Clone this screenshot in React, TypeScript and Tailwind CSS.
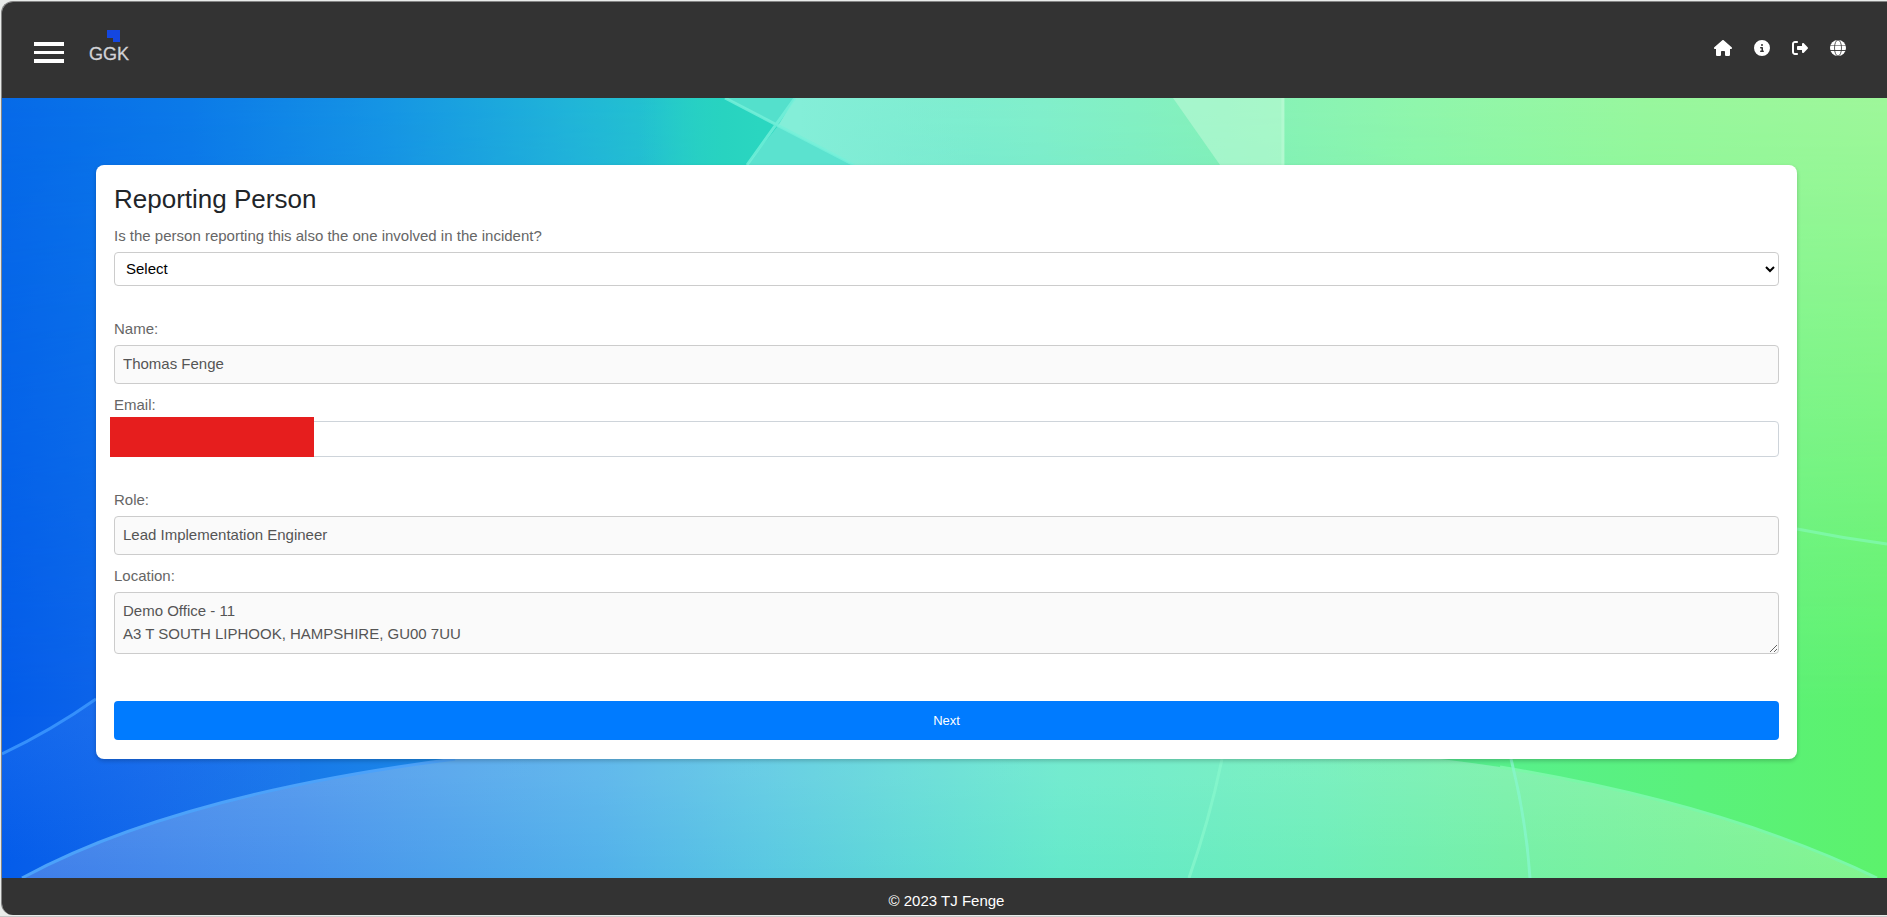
import { FaCircleInfo, FaHouse, FaRightFromBracket } from "react-icons/fa6";

const labelClass = "block mb-1 text-[15px] leading-6 text-[#666]";
const readOnlyClass = "block w-full rounded border border-[#ccc] bg-[#fafafa] px-2 text-[15px] text-[#555]";

function Logo() {
    return (
        <svg viewBox="0 0 48 40" className="h-10 w-12" role="img" aria-label="GGK">
            <path d="M19 2h13v12h-7v-4h-6z" fill="#1447e0" />
            <text x="1" y="32" fontSize="18" fontFamily="Liberation Sans, Arial, sans-serif" fill="#d2d2d6" stroke="#d2d2d6" strokeWidth="0.3">GGK</text>
        </svg>
    )
}

function Globe() {
    return (
        <svg viewBox="0 0 16 16" className="h-4 w-4" aria-hidden="true">
            <circle cx="8" cy="8" r="8" fill="#fff" />
            <ellipse cx="8" cy="8" rx="3.5" ry="8" fill="none" stroke="#333" strokeWidth="0.8" />
            <path d="M0 5.5h16" stroke="#333" strokeWidth="0.5" />
            <path d="M0 10.5h16" stroke="#333" strokeWidth="0.9" />
        </svg>
    )
}

function Wallpaper() {
    return (
        <svg viewBox="2 98 1885 780" preserveAspectRatio="none" className="absolute inset-0 h-full w-full" aria-hidden="true">
            <defs>
                <linearGradient id="base" x1="0" x2="1" y1="0" y2="0">
                    <stop offset="0" stopColor="#045cea" />
                    <stop offset="0.08" stopColor="#1268ea" />
                    <stop offset="0.22" stopColor="#1b86e8" />
                    <stop offset="0.5" stopColor="#3ccfd0" />
                    <stop offset="0.8" stopColor="#58f08a" />
                    <stop offset="1" stopColor="#5cf26c" />
                </linearGradient>
                <linearGradient id="top" x1="0" x2="1" y1="0" y2="0">
                    <stop offset="0" stopColor="#066ae8" />
                    <stop offset="0.1" stopColor="#0b7ae8" />
                    <stop offset="0.2" stopColor="#1594e4" />
                    <stop offset="0.3" stopColor="#20b4d8" />
                    <stop offset="0.35" stopColor="#23c4ce" />
                    <stop offset="0.39" stopColor="#2ad6be" />
                    <stop offset="0.43" stopColor="#7cecd6" />
                    <stop offset="0.55" stopColor="#82efcb" />
                    <stop offset="0.65" stopColor="#86f1ba" />
                    <stop offset="0.75" stopColor="#90f6ac" />
                    <stop offset="0.87" stopColor="#98f79e" />
                    <stop offset="1" stopColor="#9ef79a" />
                </linearGradient>
                <linearGradient id="fade" x1="0" x2="0" y1="0" y2="1">
                    <stop offset="0" stopColor="#fff" />
                    <stop offset="0.15" stopColor="#ddd" />
                    <stop offset="0.55" stopColor="#777" />
                    <stop offset="1" stopColor="#000" />
                </linearGradient>
                <mask id="topFade">
                    <rect x="2" y="98" width="1885" height="620" fill="url(#fade)" />
                </mask>
                <linearGradient id="facet" gradientUnits="userSpaceOnUse" x1="640" x2="760" y1="0" y2="0">
                    <stop offset="0" stopColor="#26cfc6" stopOpacity="0" />
                    <stop offset="0.7" stopColor="#28d3c0" />
                    <stop offset="1" stopColor="#2ad6c0" />
                </linearGradient>
                <linearGradient id="mint" gradientUnits="userSpaceOnUse" x1="800" x2="980" y1="0" y2="0">
                    <stop offset="0" stopColor="#84eed8" />
                    <stop offset="1" stopColor="#84eed0" stopOpacity="0" />
                </linearGradient>
                <linearGradient id="arch" gradientUnits="userSpaceOnUse" x1="22" x2="1877" y1="0" y2="0">
                    <stop offset="0" stopColor="#3f7eea" />
                    <stop offset="0.15" stopColor="#4792ec" />
                    <stop offset="0.31" stopColor="#50b0ea" />
                    <stop offset="0.4" stopColor="#58c8e2" />
                    <stop offset="0.48" stopColor="#5edad6" />
                    <stop offset="0.56" stopColor="#64e9ca" />
                    <stop offset="0.7" stopColor="#6ceeb9" />
                    <stop offset="0.8" stopColor="#74f0a6" />
                    <stop offset="1" stopColor="#82f48e" />
                </linearGradient>
                <linearGradient id="archShade" x1="0" x2="0" y1="0" y2="1">
                    <stop offset="0.3" stopColor="#fff" stopOpacity="0.1" />
                    <stop offset="1" stopColor="#fff" stopOpacity="0" />
                </linearGradient>
                <linearGradient id="glow" x1="0" x2="0" y1="0" y2="1">
                    <stop offset="0" stopColor="#2f7cf0" stopOpacity="0.4" />
                    <stop offset="1" stopColor="#2f7cf0" stopOpacity="0" />
                </linearGradient>
            </defs>

            <rect x="2" y="98" width="1885" height="780" fill="url(#base)" />
            <rect x="2" y="98" width="1885" height="620" fill="url(#top)" mask="url(#topFade)" />

            {/* facets behind the top edge of the card */}
            <path d="M640 98H725L778 126L747 165H640z" fill="url(#facet)" />
            <path d="M725 98H795L778 126z" fill="#54e0cc" />
            <path d="M778 126L854 165H747z" fill="#5be2cf" />
            <path d="M795 98H980V165H854L778 126z" fill="url(#mint)" />
            <path d="M1173 98H1284V165H1220z" fill="#c8fbdc" opacity="0.5" />
            <path d="M1283 98V165" stroke="#b8fad4" strokeWidth="3" opacity="0.7" />
            <path d="M725 98L854 165M795 98L747 165" stroke="#76f0da" strokeWidth="3" opacity="0.8" fill="none" />

            <path d="M2 754Q52 730 96 699L300 699V860H2z" fill="url(#glow)" />
            <path d="M2 754Q52 730 96 699" stroke="#3590fc" strokeWidth="3" fill="none" />
            <path d="M1797 529Q1842 538 1887 544" stroke="#7cf8a4" strokeWidth="3" fill="none" />

            <path d="M22 878C140 814 298 779 455 759C780 722 1200 722 1500 767C1640 790 1770 826 1877 878z" fill="url(#arch)" />
            <path d="M22 878C140 814 298 779 455 759C780 722 1200 722 1500 767C1640 790 1770 826 1877 878z" fill="url(#archShade)" />
            <path d="M22 878C140 814 298 779 455 759" stroke="#4ca2fa" strokeWidth="3" fill="none" />
            <path d="M1500 767C1640 790 1770 826 1877 878" stroke="#7af8a8" strokeWidth="3" fill="none" />
            <path d="M1222 759Q1210 818 1189 878M1511 759Q1526 818 1530 878" stroke="#86f6cc" strokeWidth="3" opacity="0.8" fill="none" />
        </svg>
    )
}

export default function App() {
    return (
        <div className="flex min-h-screen flex-col border-b border-[#c8c8c8] bg-[#e9ecea] pb-px pl-px pt-px font-['Liberation_Sans',Arial,sans-serif]">
            <div className="flex flex-1 flex-col overflow-hidden rounded-l-xl border-l border-t border-[#858585]">
                <header className="flex h-24 items-center justify-between bg-[#333] pl-8 pr-[41px]">
                    <div className="flex items-center gap-6">
                        <button type="button" aria-label="Menu" className="mt-1">
                            <svg viewBox="0 0 30 21" className="h-[21px] w-[30px]" fill="#fff">
                                <path d="M0 0h30v4H0zM0 9h30v3H0zM0 17h30v4H0z" />
                            </svg>
                        </button>
                        <a href="#home" className="-mt-1"><Logo /></a>
                    </div>
                    <nav className="-mt-1 flex items-center gap-[22px] text-white">
                        <a href="#home" aria-label="Home"><FaHouse className="h-4 w-[18px]" /></a>
                        <a href="#info" aria-label="Information"><FaCircleInfo className="h-4 w-4" /></a>
                        <a href="#logout" aria-label="Log out"><FaRightFromBracket className="h-4 w-4" /></a>
                        <a href="#language" aria-label="Language"><Globe /></a>
                    </nav>
                </header>

                <main className="relative flex-1 bg-[#0a6ae8] pb-8 pl-[94px] pr-[90px] pt-[67px]">
                    <Wallpaper />
                    <form className="relative flex flex-col gap-[9px] rounded-lg bg-white px-[18px] pb-[19px] pt-[18px] shadow-[0_2px_4px_rgba(0,0,0,0.2)]">
                        <h1 className="text-[26px] leading-8 text-[#212529]">Reporting Person</h1>

                        <div className="mb-[22px]">
                            <label htmlFor="involved" className={labelClass}>Is the person reporting this also the one involved in the incident?</label>
                            <select id="involved" className="block h-[34px] w-full rounded border border-[#ccc] bg-white pb-px pl-[7px] pr-[7px] text-[15px] text-black">
                                <option>Select</option>
                                <option>Yes</option>
                                <option>No</option>
                            </select>
                        </div>

                        <div>
                            <label htmlFor="name" className={labelClass}>Name:</label>
                            <input id="name" type="text" readOnly value="Thomas Fenge" className={`${readOnlyClass} h-[39px] pb-0.5`} />
                        </div>

                        <div className="mb-[22px]">
                            <label htmlFor="email" className={labelClass}>Email:</label>
                            <div className="relative">
                                <input id="email" type="email" className="block h-9 w-full rounded border border-[#ced4da] bg-white px-2 text-[15px] text-[#555]" />
                                <span className="absolute -left-1 -top-1 bottom-0 w-[204px] bg-[#e61e1e]"></span>
                            </div>
                        </div>

                        <div>
                            <label htmlFor="role" className={labelClass}>Role:</label>
                            <input id="role" type="text" readOnly value="Lead Implementation Engineer" className={`${readOnlyClass} h-[39px] pb-0.5`} />
                        </div>

                        <div className="mb-[38px]">
                            <label htmlFor="location" className={labelClass}>Location:</label>
                            <textarea id="location" rows={2} readOnly className={`${readOnlyClass} resize pb-2 pt-1.5 leading-[23px]`} value={"Demo Office - 11\nA3 T SOUTH LIPHOOK, HAMPSHIRE, GU00 7UU"} />
                        </div>

                        <button type="button" className="h-[39px] w-full rounded bg-[#007bff] text-[13px] text-white">Next</button>
                    </form>
                </main>

                <footer className="bg-[#333] pb-0.5 pl-1 pt-[11px] text-center text-[15px] leading-6 text-white">
                    © 2023 TJ Fenge
                </footer>
            </div>
        </div>
    )
}
